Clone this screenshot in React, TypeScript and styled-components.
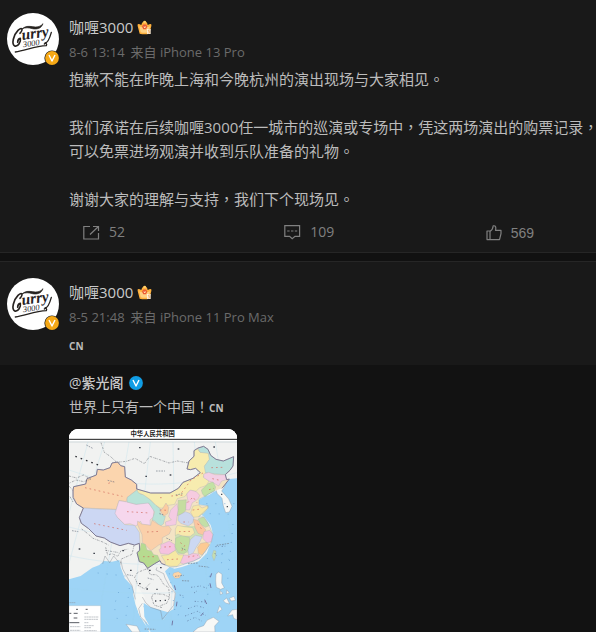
import React from 'react';
import styled, { createGlobalStyle } from 'styled-components';

const GlobalStyle = createGlobalStyle`
  * { box-sizing: border-box; }
  body {
    margin: 0;
    background: #111111;
    color: #bcbcbc;
    font-family: "Open Sans", "Noto Sans CJK TC", sans-serif;
    overflow-x: hidden;
  }
`;

const Feed = styled.main`
  display: flex;
  flex-direction: column;
  gap: 8px;
`;

const Post = styled.article<{ $first?: boolean }>`
  background: #191919;
  border-top: ${(p) => (p.$first ? '0' : '1px solid #262626')};
  border-bottom: ${(p) => (p.$first ? '1px solid #262626' : '0')};
  padding-top: ${(p) => (p.$first ? 13 : 16)}px;
`;

const Head = styled.header`
  display: flex;
  gap: 10px;
  height: 52px;
  padding-left: 7px;
`;

const AvatarLink = styled.a`
  position: relative;
  flex: none;
  width: 52px;
  height: 52px;
  text-decoration: none;
`;

const AvatarBadge = styled.span`
  position: absolute;
  right: -1px;
  bottom: -1px;
  display: flex;
`;

const Byline = styled.div`
  display: flex;
  flex-direction: column;
  padding-top: 3px;
`;

const NameRow = styled.div`
  display: flex;
  align-items: center;
  gap: 4px;
  height: 22px;
`;

const Name = styled.a<{ $small?: boolean }>`
  color: #cacaca;
  font-size: ${(p) => (p.$small ? 14 : 15)}px;
  font-weight: ${(p) => (p.$small ? 500 : 400)};
  line-height: 22px;
  text-decoration: none;
`;

const Meta = styled.div`
  display: flex;
  gap: 6px;
  color: #6b6b6b;
  font-size: 13px;
  line-height: 28px;
  white-space: nowrap;
`;

const Body = styled.div`
  padding: 2px 0 0 69px;
`;

const Line = styled.p`
  margin: 0;
  min-height: 24px;
  font-size: 15px;
  line-height: 24px;
  white-space: nowrap;
`;

const Flag = styled.span`
  font-family: "Noto Sans", sans-serif;
  font-size: 10px;
  font-weight: 700;
`;

const Actions = styled.footer`
  display: grid;
  grid-template-columns: 1fr 1fr auto;
  padding: 9px 62px 8px 83px;
`;

const Action = styled.button<{ $plain?: boolean }>`
  display: flex;
  align-items: center;
  justify-self: start;
  gap: 9px;
  height: 24px;
  padding: ${(p) => (p.$plain ? '2px 0 0' : '0')};
  border: 0;
  background: none;
  color: #808080;
  font-family: ${(p) => (p.$plain ? '"Liberation Sans"' : '"Open Sans"')}, sans-serif;
  font-size: 14px;
  line-height: 24px;
  cursor: pointer;
`;

const FlagBody = styled.div`
  padding: 2px 0 7px 69px;
`;

const Quote = styled.section`
  background: #121212;
  padding: 7px 0 0 69px;
`;

const QuoteText = styled.p`
  margin: 0;
  padding-top: 2px;
  font-size: 14px;
  line-height: 22px;
`;

const MapButton = styled.button`
  display: block;
  width: 168px;
  margin-top: 10px;
  padding: 0;
  border: 0;
  border-radius: 9px 9px 0 0;
  background: #fff;
  overflow: hidden;
  cursor: pointer;
`;

function Verified({ color, size }: { color: string; size: number }) {
  return (
    <svg width={size} height={size} viewBox="0 0 16 16" role="img" aria-label="V">
      <circle cx="8" cy="8" r="7.6" fill="#191919" />
      <circle cx="8" cy="8" r="6.9" fill={color} />
      <path d="M5 5 L8 11 L11 5" fill="none" stroke="#fff" strokeWidth="1.4" strokeLinejoin="round" />
    </svg>
  );
}

function Crown() {
  return (
    <svg width="15" height="15" viewBox="0 0 45 45" aria-hidden="true">
      <path d="M2 18 Q0 11 6 12 L13 15 Q16 4 23 4 Q30 4 32 15 L39 12 Q45 11 43 18 L37 41 Q23 45 8 41 Z" fill="#ffb13d" />
      <path d="M7 19 L15 22 L23 12 L31 22 L39 19 L35 37 Q22 40 11 37 Z" fill="#ffd184" />
      <path d="M15 20 Q17 13 23 13 Q29 13 31 20 L27 28 H19 Z" fill="#ec5a33" />
      <path d="M20 17 L23 21 L27 17 L25 24 H21 Z" fill="#ffe1b0" />
      <circle cx="23" cy="6" r="4" fill="#ffcf6b" />
      <path d="M30 27 H41 V42 H30 Z" fill="#fff4e2" />
      <path d="M39 30 H34 V34 H38 V39 H32" fill="none" stroke="#ee9d48" strokeWidth="2" />
    </svg>
  );
}

function Avatar() {
  return (
    <AvatarLink href="#profile" aria-label="咖喱3000">
      <svg width="52" height="52" viewBox="0 0 156 156">
        <circle cx="78" cy="78" r="78" fill="#fff" />
        <g fill="none" stroke="#26221f" strokeLinecap="round" strokeLinejoin="round">
          <path d="M39 61 C50 47 44 42 33 52 C19 66 13 94 23 99 C34 102 42 86 40 76 C36 77 32 82 32 88" strokeWidth="5" />
          <path d="M46 47 C60 35 74 42 86 42 C96 42 103 38 108 32 C103 47 88 50 76 47 C65 44 56 43 46 47 Z" strokeWidth="2" fill="#26221f" />
          <path d="M25 117 C55 113 84 99 118 98 C121 92 116 89 112 93" strokeWidth="4" />
          <path d="M133 58 C128 76 121 90 114 90" strokeWidth="4" />
        </g>
        <g fill="#26221f" fontFamily="Liberation Serif, serif" fontStyle="italic" fontWeight="700">
          <text x="46" y="81" fontSize="46" transform="rotate(-8 46 81)">urry</text>
          <text x="49" y="103" fontSize="25" fontWeight="400" transform="rotate(-8 49 103)">3000</text>
        </g>
      </svg>
      <AvatarBadge><Verified color="#f5a816" size={16} /></AvatarBadge>
    </AvatarLink>
  );
}

function PostHead({ time, device }: { time: string; device: string }) {
  return (
    <Head>
      <Avatar />
      <Byline>
        <NameRow>
          <Name href="#profile">咖喱3000</Name>
          <Crown />
        </NameRow>
        <Meta><time>{time}</time><span>来自 {device}</span></Meta>
      </Byline>
    </Head>
  );
}

const iconStroke = { fill: 'none', stroke: '#808080', strokeWidth: 1.2 };

function ShareIcon() {
  return (
    <svg width="17" height="17" viewBox="0 0 17 17" {...iconStroke} aria-hidden="true">
      <path d="M7 2.5 H.8 V15 H15.5 V9 M10 2.5 H15.5 V7 M15.2 2.8 L7 10.5" />
    </svg>
  );
}

function CommentIcon() {
  return (
    <svg width="17" height="17" viewBox="0 0 17 17" {...iconStroke} aria-hidden="true">
      <path d="M.8 1.6 H15.6 V12.4 H11 L8.2 14.8 L5.6 12.4 H.8 Z M3.2 7 H5.6 M7 7 H9.4 M10.8 7 H13.2" />
    </svg>
  );
}

function LikeIcon() {
  return (
    <svg width="16" height="17" viewBox="0 0 16 17" {...iconStroke} aria-hidden="true">
      <path d="M1 6 H4 V14.6 H1 Z M4 6.6 C6.5 5 7 3.2 7.2 .8 C9.7 .4 10.2 2.2 9.5 5.4 H15 V8.6 L13.5 14.6 H4" strokeLinejoin="round" />
    </svg>
  );
}

const border = 'M486 205 L508 177 L500 179 L496 164 L510 151 L519 138 L521 110 L490 123 L468 118 L452 106 L444 88 L431 79 L414 84 L402 92 V109 L387 123 L381 147 L391 149 L407 145 L421 158 L399 175 L369 187 L355 205 L330 219 H272 L230 207 V193 L214 180 L196 171 L194 140 L182 137 L173 126 L156 129 L150 143 L130 150 L112 148 L109 165 L81 176 L77 192 L41 200 L39 210 V232 L50 252 L70 264 L58 293 L64 310 L86 326 L108 348 L133 354 L151 366 L180 377 L205 370 L224 375 L238 370 L239 391 L231 398 L238 425 L251 429 L263 445 L284 431 L300 422 L304 430 L316 435';
const coast = 'L330 442 L351 440 L401 423 L421 413 L438 391 L453 367 L459 344 L448 317 L433 291 L416 290 L443 265 L444 257 L417 254 L417 238 L464 212';

const provinces: [string, string][] = [
  ['#fbd5ae', 'M41 200 L77 192 L81 176 L109 165 L112 148 L130 150 L150 143 L156 129 L173 126 L182 137 L194 140 L196 171 L214 180 L230 193 L232 209 L202 232 L198 245 L177 242 L169 268 L120 266 L70 264 L50 252 L41 232 L39 210 Z'],
  ['#ccd7f3', 'M70 264 L120 267 L170 269 L172 292 L195 314 L224 316 L238 337 L240 370 L224 375 L205 370 L180 377 L151 366 L133 354 L108 348 L86 326 L64 310 L58 293 L64 281 Z'],
  ['#f6d7ed', 'M177 242 L202 246 L228 253 L263 247 L282 268 L280 291 L270 300 L271 316 L247 314 L241 303 L229 318 L210 311 L194 313 L172 292 L165 280 Z'],
  ['#b9e3d8', 'M202 232 L232 209 L242 223 L252 222 L271 239 L287 255 L302 268 L300 280 L316 289 L310 312 L300 319 L292 310 L282 301 L276 301 L284 276 L266 249 L229 253 L201 246 Z'],
  ['#f7ecaf', 'M230 207 L272 219 L330 219 L355 205 L369 187 L399 175 L421 158 L407 145 L391 149 L381 147 L387 123 L402 109 L402 92 L411 87 L420 96 L447 99 L449 119 L435 137 L439 159 L430 170 L447 183 L438 197 L419 203 L408 214 L390 211 L374 230 L352 236 L344 253 L318 257 L314 265 L300 264 L288 256 L271 239 L251 225 L235 218 Z'],
  ['#b8e1dc', 'M414 84 L431 79 L444 88 L452 106 L468 118 L490 123 L521 110 L519 138 L510 151 L493 164 L463 161 L436 158 L433 139 L448 118 L445 100 L420 97 Z'],
  ['#f3cfe4', 'M431 162 L446 157 L465 164 L496 164 L500 179 L485 183 L476 198 L458 187 L447 183 L431 173 Z'],
  ['#c3e2a4', 'M424 210 L446 190 L459 186 L467 201 L464 212 L446 222 L435 231 L427 221 Z'],
  ['#f6cbe0', 'M380 222 L391 210 L409 215 L419 226 L415 235 L409 241 L397 248 L389 270 L375 269 L377 250 L384 243 Z'],
  ['#c5dda0', 'M354 241 L379 239 L377 271 L367 282 L351 287 L355 262 Z'],
  ['#f4cbe2', 'M326 289 L332 270 L351 251 L354 269 L350 297 L348 314 L318 319 L316 306 L334 300 Z'],
  ['#f8e7a6', 'M392 277 L399 258 L415 255 L426 264 L444 257 L445 264 L429 281 L416 290 L400 292 Z'],
  ['#fbcca0', 'M301 272 L308 265 L318 249 L326 262 L324 280 L311 289 L306 280 Z'],
  ['#ccd6ef', 'M355 287 L376 275 L390 280 L402 294 L398 309 L385 318 L362 310 L354 301 Z'],
  ['#fad0aa', 'M233 303 L245 312 L272 316 L276 301 L293 312 L309 320 L325 317 L334 328 L328 342 L307 353 L307 369 L295 376 L273 392 L259 378 L247 367 L246 344 L232 313 Z'],
  ['#b7db90', 'M244 369 L256 373 L261 390 L274 393 L281 404 L293 406 L300 422 L284 431 L277 435 L263 445 L251 429 L238 425 L231 398 L239 391 Z'],
  ['#f5c2df', 'M302 374 L328 363 L345 374 L346 391 L326 403 L302 401 L297 389 L303 385 Z'],
  ['#f8e9ad', 'M346 327 L352 316 L373 320 L398 323 L404 339 L391 349 L367 349 L354 342 L346 347 Z'],
  ['#fac6a0', 'M400 298 L414 301 L427 317 L438 330 L428 345 L414 340 L405 323 Z'],
  ['#c3dfa6', 'M414 297 L430 291 L442 306 L448 317 L436 322 L424 314 Z'],
  ['#c2df9f', 'M347 354 L365 347 L388 352 L390 367 L386 389 L371 402 L355 398 L345 380 Z'],
  ['#ccd8f2', 'M391 359 L406 346 L426 350 L420 365 L409 381 L399 400 L386 406 L384 391 Z'],
  ['#f4c2df', 'M432 335 L449 331 L459 344 L455 365 L441 368 L428 355 Z'],
  ['#fcca93', 'M422 370 L441 367 L449 375 L438 391 L427 406 L415 400 L413 382 Z'],
  ['#f6e8a3', 'M304 407 L326 404 L346 391 L355 404 L371 405 L369 421 L351 439 L333 439 L316 435 L315 425 Z'],
  ['#f4c5de', 'M371 405 L386 406 L398 400 L415 402 L421 413 L401 423 L370 432 L361 428 Z'],
  ['#c4ddb0', 'M461 391 L468 393 L466 412 L462 422 L456 407 Z'],
  ['#ffd5a6', 'M341 459 L355 455 L365 462 L358 474 L345 475 L338 466 Z'],
];

const labels = [
  'M75 203 L187 229', 'M102 311 L200 331', 'M201 275 L270 279',
  'M145 190 L160 185', 'M300 233 L309 233 M334 228 L374 225', 'M365 218 L393 180 L432 157',
  'M454 143 L491 142', 'M457 176 L480 181', 'M447 209 L462 205', 'M249 410 L291 410',
  'M261 336 L301 334', 'M313 381 L336 380', 'M357 335 L393 334', 'M321 419 L355 417',
  'M384 411 L413 406', 'M361 368 L374 377 L364 395', 'M299 270 L324 271',
  'M383 248 L399 231 L411 248', 'M398 270 L424 267', 'M370 306 L385 306', 'M413 311 L426 329',
];

function MapDrawing() {
  return (
    <svg width="168" height="203" viewBox="27 27 504 609" display="block">
      <rect x="27" y="27" width="504" height="609" fill="#fff" />
      <rect x="27" y="64" width="504" height="572" fill="#f1f2f1" />
      <path d="M531 175 L508 177 L486 205 L462 215 L447 225 L430 232 L417 240 L417 253 L444 257 L443 267 L425 284 L433 291 L452 315 L459 341 L453 367 L440 400 L416 424 L366 441 L343 446 L329 441 L315 454 L330 485 L347 519 L340 568 L324 577 L310 600 L272 570 L248 557 L251 600 L268 636 L531 636 Z M27 478 L62 468 L97 443 L118 435 L132 423 L156 425 L178 420 L182 442 L194 475 L216 498 L226 535 L236 581 L253 610 L272 636 L27 636 Z" fill="#9ed4f6" />
      <path d="M232 497 L255 532 L249 557 L266 589 L284 613 L277 625 L241 592 L226 553 L219 521 Z" fill="#f6f7f4" />
      <path d="M272 562 L251 549 L253 590 L272 625 L319 635 L310 600 L324 577 Z" fill="#9ed4f6" />
      <g stroke="#9ed5ed" strokeWidth="1" fill="none" opacity=".65">
        <path d="M84 66 L27 280 M134 66 L68 278 L27 430 M207 66 L156 364 L108 636 M271 66 L245 300 L217 636 M339 66 L344 348 L330 636 M403 66 L434 350 L447 636 M466 66 L506 312 L531 448" />
        <path d="M27 150 C180 204 356 206 531 158 M27 234 C180 282 370 279 531 240 M27 321 C180 362 376 361 531 324 M27 407 C190 442 370 441 531 412 M27 505 C190 525 362 525 531 502 M27 592 C190 604 370 604 531 585" />
      </g>
      <g fill="#f7f8f6" stroke="#7f8a98" strokeWidth="1">
        <path d="M466 205 L480 197 L486 182 L500 183 L492 203 L485 213 L506 237 L516 259 L508 276 L497 278 L490 258 L486 235 L472 221 Z" />
        <path d="M468 462 L476 456 L486 463 L485 489 L493 503 L482 508 L469 502 L467 482 Z" />
        <path d="M460 592 L441 601 L431 617 L414 623 L399 636 H465 L464 618 L477 604 Z" />
        <path d="M198 613 L231 618 L240 636 H216 Z" />
        <path d="M480 512 L489 520 L481 524 Z M500 510 L508 518 L499 522 Z M508 535 L522 529 L526 541 L514 543 Z M490 542 L500 534 L509 552 L497 549 Z M479 557 L486 568 L471 579 Z M516 570 L531 568 V599 L521 595 L518 584 L503 588 Z" />
      </g>
      <path d={`${border} ${coast} Z`} fill="#f3e3c4" />
      <path d="M345 340 L355 318 L405 318 L430 345 L400 395 L345 405 Z" fill="#cfe0b4" />
      <g stroke="#a9adb4" strokeWidth="1" strokeLinejoin="round">
        {provinces.map(([fill, d]) => <path key={d} fill={fill} d={d} />)}
      </g>
      <path d={border} fill="none" stroke="#7f7b95" strokeWidth="3" strokeLinejoin="round" />
      <path d={`M316 435 ${coast}`} fill="none" stroke="#75a9c9" strokeWidth="1" />
      <g fill="none" stroke="#62666e" strokeWidth="1.6" strokeDasharray="6 3 2 3">
        <path d="M123 68 L133 97 L152 110 L170 127 L199 124 L225 115 L253 131 L269 109 L299 119 L327 129 L352 123 L386 129" />
        <path d="M27 168 L50 174 L70 165 L93 177 L71 185 L48 180 L27 190 M28 199 L38 211 M30 230 L39 246 M65 327 L82 340 L99 355 L128 366 L145 375 M137 382 L143 405 L156 401 L173 409 L183 392 L205 387 M136 391 L177 398" />
        <path d="M222 376 L216 403 L184 417 L181 434 M262 445 L271 464 L289 464 L301 476 L311 493 L326 503 L329 532 L320 550 L299 558 M259 447 L233 457 L224 472 L234 496 L254 507 L269 491 M275 532 L280 521 L310 523 L329 532 M275 533 L282 555 L306 563" />
      </g>
      <path d="M291 442 L288 450 L311 461 L315 474 L328 498 L346 519 L341 556 L324 577 L307 598 L302 572 L272 562 L257 548 L247 531 M247 550 L236 566 L242 591 L261 610 M183 424 L188 447 L205 478 L216 497 L226 538 M128 432 L135 408 L149 428 L161 408 L175 425" fill="none" stroke="#7b828b" strokeWidth="1.2" />
      <g fill="none" stroke="#d0665a" strokeWidth="2" strokeDasharray="5 9">
        {labels.map((d) => <path key={d} d={d} />)}
      </g>
      <path d="M46 109 L125 139" stroke="#34363c" strokeWidth="4" strokeDasharray="5 12" />
      <g fill="none" stroke="#717887" strokeWidth="2" strokeDasharray="5 3">
        <path d="M79 75 L98 85 M143 181 L163 186 M288 153 L315 153 M347 225 L368 221 M365 384 L377 390 M319 354 L336 362 M298 281 L310 284 M384 431 L413 429 M416 438 L443 441 M345 469 L371 466 M366 482 L390 483 M464 399 L470 407 M470 376 L508 370 M36 332 L55 335 M201 464 L219 467 M263 474 L280 479 M254 627 L287 628" />
      </g>
      <path d="M237 83 h5 M353 87 h5 M460 81 h5 M256 169 h5 M329 165 h5 M56 387 h5 M100 400 h5 M187 392 h5 M210 451 h5 M237 491 h5 M267 451 h5 M300 443 h5 M289 508 h4 M285 543 h4 M299 542 h4 M314 541 h4 M259 507 h5 M500 260 h4 M483 223 h4" stroke="#454953" strokeWidth="4" />
      <g fill="none" stroke="#5f9bce" strokeWidth="2" strokeDasharray="3 24">
        <path d="M439 251 L523 251 M449 281 L520 283 M493 346 L483 445 M519 312 L503 480 M113 459 L196 468 M176 516 L162 558 L176 613 M208 504 L197 598 M370 531 L354 588 M442 414 L449 461 L443 528 M328 460 L345 575 M508 420 L472 393" />
      </g>
      <path d="M343 496 L347 510 M351 545 L349 559 M338 602 L336 616 M450 490 L453 504 M455 460 L451 472 M434 539 L440 552 M430 578 L422 588" stroke="#68618f" strokeWidth="2.4" />
      <g fill="none" stroke="#6582a8" strokeWidth="2.4" strokeDasharray="4 5 2 8">
        <path d="M393 502 L421 498 L448 507 M384 566 L409 557 L435 564 M375 588 L412 574 L437 586 M382 603 L405 592 L425 603 M359 525 L376 529 M402 519 L412 512 M404 544 L439 546 M466 380 L504 378" />
      </g>
      <path d="M27 557 H122 V636 H27 Z" fill="#fff" stroke="#9eacb8" />
      <path d="M48 568 h6 M77 568 h6 M28 580 h6 M41 580 h12 M41 594 h11 M28 608 h30" stroke="#5a5d64" strokeWidth="3" />
      <path d="M30 620 h31 M30 631 h31 M73 580 h12 M73 591 h43 M73 598 h42 M73 608 h12 M73 617 h29 M73 623 h21 M73 632 h37 M28 548 h18" stroke="#8d959d" strokeWidth="1.6" strokeDasharray="6 1" />
      <path d="M27 27 H531 V57 H27 Z" fill="#fff" />
      <path d="M27 58 H531" stroke="#1d1d1d" strokeWidth="3" />
      <path d="M27 66 H531" stroke="#8ca8b4" strokeWidth="1" />
      <text x="278" y="49" textAnchor="middle" fontFamily="Noto Sans CJK SC, sans-serif" fontSize="19" fontWeight="700" fill="#222">中华人民共和国</text>
    </svg>
  );
}

export default function App() {
  return (
    <>
      <GlobalStyle />
      <Feed>
        <Post $first>
          <PostHead time="8-6 13:14" device="iPhone 13 Pro" />
          <Body>
            <Line>抱歉不能在昨晚上海和今晚杭州的演出现场与大家相见。</Line>
            <Line />
            <Line>我们承诺在后续咖喱3000任一城市的巡演或专场中，凭这两场演出的购票记录，</Line>
            <Line>可以免票进场观演并收到乐队准备的礼物。</Line>
            <Line />
            <Line>谢谢大家的理解与支持，我们下个现场见。</Line>
          </Body>
          <Actions>
            <Action aria-label="转发 52"><ShareIcon />52</Action>
            <Action aria-label="评论 109"><CommentIcon />109</Action>
            <Action $plain aria-label="赞 569"><LikeIcon />569</Action>
          </Actions>
        </Post>
        <Post>
          <PostHead time="8-5 21:48" device="iPhone 11 Pro Max" />
          <FlagBody><Line><Flag>CN</Flag></Line></FlagBody>
          <Quote>
            <NameRow>
              <Name $small href="#quoted">@紫光阁</Name>
              <Verified color="#109de5" size={16} />
            </NameRow>
            <QuoteText>世界上只有一个中国！<Flag>CN</Flag></QuoteText>
            <MapButton aria-label="中华人民共和国">
              <MapDrawing />
            </MapButton>
          </Quote>
        </Post>
      </Feed>
    </>
  );
}
